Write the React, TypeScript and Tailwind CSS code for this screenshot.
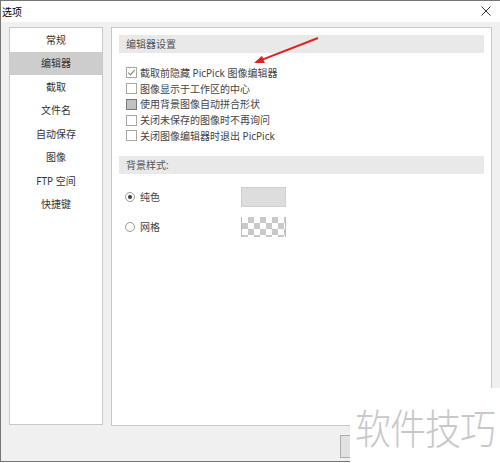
import React from 'react';

const menu = ['常规', '编辑器', '截取', '文件名', '自动保存', '图像', 'FTP 空间', '快捷键'];

const opts: { label: string; state: 'checked' | 'off' | 'mixed' }[] = [
  { label: '截取前隐藏 PicPick 图像编辑器', state: 'checked' },
  { label: '图像显示于工作区的中心', state: 'off' },
  { label: '使用背景图像自动拼合形状', state: 'mixed' },
  { label: '关闭未保存的图像时不再询问', state: 'off' },
  { label: '关闭图像编辑器时退出 PicPick', state: 'off' },
];

const Checkbox = ({ state }: { state: 'checked' | 'off' | 'mixed' }) => {
  if (state === 'mixed') {
    return <span className="w-[11px] h-[11px] border border-[#7a7a7a] bg-[#c2c2c2] shrink-0" />;
  }
  return (
    <span className="w-[11px] h-[11px] border border-[#a8a8a8] bg-white shrink-0 flex items-center justify-center">
      {state === 'checked' && (
        <svg width="9" height="9" viewBox="0 0 9 9">
          <path d="M1.2 4.6 L3.4 6.8 L7.8 1.8" fill="none" stroke="#8a8a8a" strokeWidth="1.2" />
        </svg>
      )}
    </span>
  );
};

const Radio = ({ on }: { on: boolean }) => (
  <span className="w-[10px] h-[10px] rounded-full border border-[#9a9a9a] bg-white shrink-0 flex items-center justify-center">
    {on && <span className="w-[4px] h-[4px] rounded-full bg-[#3c3c3c]" />}
  </span>
);

const SectionHeader = ({ title }: { title: string }) => (
  <div className="h-[18px] bg-[#e9e9e9] flex items-center pl-[7px] text-[10px] leading-none text-[#555]">{title}</div>
);

export default function App() {
  return (
    <div className="w-[500px] h-[463px] bg-white relative overflow-hidden font-['Noto_Sans','Noto_Sans_CJK_SC',sans-serif] text-[#222]">
      <div className="h-[462px] border-t border-l border-b border-[#767676] flex flex-col">
        <div className="h-[21px] bg-white flex items-center pl-[1px] text-[10px] leading-none text-black relative">
          选项
          <svg className="absolute right-[9px] top-[5px]" width="10" height="10" viewBox="0 0 10 10">
            <path d="M0.5 0.5 L9.5 9.5 M9.5 0.5 L0.5 9.5" stroke="#333" strokeWidth="1" />
          </svg>
        </div>
        <div className="flex-1 bg-[#f0f0f0] flex flex-col">
          <div className="flex gap-[8px] pt-[5px] pl-[8px]">
            <div className="w-[94px] h-[398px] bg-white border border-[#c8c8c8] flex flex-col">
              {menu.map((m, i) => (
                <div
                  key={m}
                  className={`h-[23.5px] flex items-center justify-center text-[10px] leading-none text-[#333] ${i === 1 ? 'bg-[#cdcdcd]' : ''}`}
                >
                  {m}
                </div>
              ))}
            </div>
            <div className="w-[381px] h-[399px] bg-white border border-[#c8c8c8] px-[7px] pt-[7px] flex flex-col">
              <SectionHeader title="编辑器设置" />
              <div className="mt-[12px] flex flex-col">
                {opts.map((o) => (
                  <div key={o.label} className="h-[15.75px] flex items-center pl-[7px] gap-[3px] text-[10px] leading-none text-[#444]">
                    <Checkbox state={o.state} />
                    <span>{o.label}</span>
                  </div>
                ))}
              </div>
              <div className="mt-[12px]">
                <SectionHeader title="背景样式:" />
              </div>
              <div className="mt-[13px] flex flex-col gap-[10px]">
                <div className="h-[20px] flex items-center pl-[6px]">
                  <Radio on />
                  <span className="ml-[5px] w-[101px] text-[10px] leading-none text-[#444]">纯色</span>
                  <span className="w-[45px] h-[20px] border border-[#cfcfcf] bg-[#dddddd]" />
                </div>
                <div className="h-[20px] flex items-center pl-[6px]">
                  <Radio on={false} />
                  <span className="ml-[5px] w-[101px] text-[10px] leading-none text-[#444]">网格</span>
                  <span className="w-[45px] h-[20px] border-x border-[#bdbdbd] bg-[conic-gradient(#c9c9c9_25%,#ffffff_0_50%,#c9c9c9_0_75%,#ffffff_0)] bg-[length:12px_12px]" />
                </div>
              </div>
            </div>
          </div>
          <div className="flex justify-end gap-[7px] pr-[7px] pt-[9px]">
            <div className="w-[73px] h-[23px] border border-[#adadad] bg-[#e1e1e1]" />
            <div className="w-[73px] h-[23px] border border-[#adadad] bg-[#e1e1e1]" />
          </div>
        </div>
      </div>

      <svg className="absolute left-0 top-0 pointer-events-none" width="500" height="463">
        <line x1="318" y1="38" x2="263" y2="59.4" stroke="#e0211d" strokeWidth="2" />
        <polygon points="254,63 264.8,62.9 262,55.8" fill="#e0211d" />
      </svg>

      <div className="absolute left-[350px] top-[388px] right-0 bottom-0 bg-white flex items-center justify-center">
        <span className="text-[36px] leading-none tracking-[-1px] text-[#c8c8c8] scale-y-[1.15] font-['Noto_Sans_CJK_SC',sans-serif] font-light">软件技巧</span>
      </div>
    </div>
  );
}
